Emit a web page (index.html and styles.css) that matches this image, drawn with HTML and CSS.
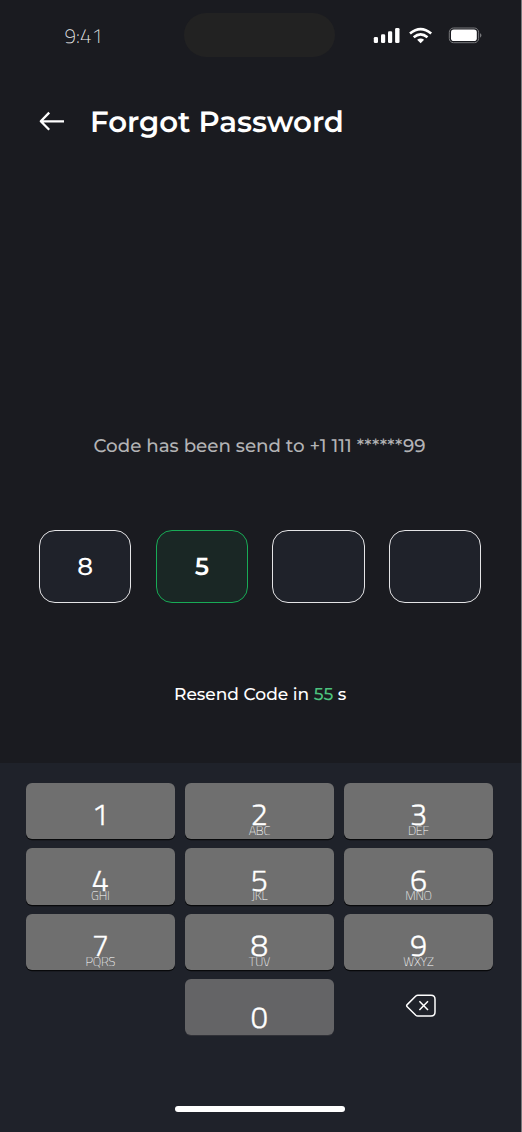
FILE: index.html
```html
<!DOCTYPE html>
<html lang="en">
<head>
<meta charset="utf-8">
<title>Forgot Password</title>
<link rel="stylesheet" href="styles.css">
</head>
<body>
<main class="phone">
  <div class="status">
    <span class="time">9:41</span>
    <div class="island"></div>
    <svg class="indicators" width="110" height="18" viewBox="0 0 110 18">
      <g fill="#fff">
        <rect x="0.8" y="10" width="4.2" height="6" rx="1.3"/>
        <rect x="8" y="7.3" width="4.2" height="8.7" rx="1.3"/>
        <rect x="15" y="4.2" width="4.2" height="11.8" rx="1.3"/>
        <rect x="22.1" y="1" width="4.4" height="15" rx="1.3"/>
      </g>
      <g fill="none" stroke="#fff" stroke-width="2.6">
        <path d="M37 6.4Q47.6 -2.3 58.2 6.4"/>
        <path d="M40.7 10.2Q47.6 4.5 54.5 10.2"/>
      </g>
      <path fill="#fff" d="M44.1 12.8Q47.6 10.3 51.1 12.8L47.6 16.3Z"/>
      <rect x="76.3" y="1" width="29.3" height="14.7" rx="4.2" fill="none" stroke="#77787b"/>
      <rect x="78" y="2.6" width="25.8" height="11.4" rx="2.8" fill="#fff"/>
      <path fill="#77787b" d="M107 6Q110 8.3 107 10.8Z"/>
    </svg>
  </div>
  <header class="header">
    <svg class="back" width="26" height="20" viewBox="0 0 26 20" fill="none" stroke="#fff" stroke-width="2.3">
      <path d="M25 10.3H2M10.2 1.6L1.8 10.3L10.2 18.8" stroke-linejoin="round"/>
    </svg>
    <h1 class="title">Forgot Password</h1>
  </header>
  <p class="sent">Code has been send to +1 111 ******99</p>
  <div class="code">
    <div class="digit">8</div>
    <div class="digit active">5</div>
    <div class="digit"></div>
    <div class="digit"></div>
  </div>
  <p class="resend">Resend Code in <span class="seconds">55</span> s</p>
  <section class="keyboard">
    <div class="keys">
      <div class="key"><b>1</b></div>
      <div class="key"><b>2</b><small>ABC</small></div>
      <div class="key"><b>3</b><small>DEF</small></div>
      <div class="key"><b>4</b><small>GHI</small></div>
      <div class="key"><b>5</b><small>JKL</small></div>
      <div class="key"><b>6</b><small>MNO</small></div>
      <div class="key"><b>7</b><small>PQRS</small></div>
      <div class="key"><b>8</b><small>TUV</small></div>
      <div class="key"><b>9</b><small>WXYZ</small></div>
      <div class="key zero"><b>0</b></div>
      <div class="delete">
        <svg width="32" height="24" viewBox="0 0 32 24" fill="none" stroke="#fff" stroke-width="1.5" stroke-linejoin="round">
          <path d="M10.8 2Q11.7 1.3 12.8 1.3H26Q30 1.3 30 5.3V18Q30 22 26 22H12.8Q11.7 22 10.8 21.2L2.2 12.8Q1.1 11.7 2.2 10.6Z"/>
          <path d="M14.4 7.3L23 16M23 7.3L14.4 16"/>
        </svg>
      </div>
    </div>
    <div class="home"></div>
  </section>
</main>
</body>
</html>
```
FILE: styles.css
```css
* { box-sizing: border-box; }
body {
  margin: 0;
  background: #77787b;
  color: #fff;
  font-family: Montserrat, Inter, sans-serif;
  text-rendering: geometricPrecision;
}
.phone {
  display: flex;
  flex-direction: column;
  width: 521px;
  height: 1132px;
  background: #1a1b20;
  overflow: hidden;
}
.status {
  display: flex;
  height: 70px;
  padding: 13px 0 0 64.5px;
}
.time {
  width: 119.5px;
  padding-top: 10px;
  font: 200 20.5px/26px "Titillium Web", "Open Sans", sans-serif;
  color: #f4f4f6;
}
.island {
  width: 151px;
  height: 44px;
  border-radius: 22px;
  background: #222;
}
.indicators { margin: 14px 0 0 38px; }
.header {
  display: flex;
  align-items: center;
  height: 104px;
  padding-left: 39px;
  gap: 25px;
}
.back { margin-top: -2px; }
.title {
  margin: 1px 0 0;
  font-size: 29.2px;
  font-weight: 600;
  white-space: nowrap;
}
.sent {
  margin: 257px 0 0;
  padding-left: 93.5px;
  font-size: 18.25px;
  font-weight: 500;
  line-height: 30px;
  color: #b3b3b5;
  white-space: nowrap;
}
.code {
  display: flex;
  gap: 24.5px;
  margin: 68.5px 0 0 39px;
}
.digit {
  display: flex;
  align-items: center;
  justify-content: center;
  width: 92.2px;
  height: 73px;
  padding-top: 1px;
  border: 1.2px solid #e4e4e6;
  border-radius: 16px;
  background: #1f222a;
  font-size: 24.5px;
  font-weight: 500;
}
.digit.active {
  border-color: #18ab56;
  background: #1a2725;
  font-weight: 600;
}
.resend {
  margin: 77px 0 0;
  padding-left: 174px;
  font-size: 17.05px;
  font-weight: 500;
  line-height: 30px;
  white-space: nowrap;
}
.seconds { color: #4cc27e; }
.keyboard {
  flex: none;
  height: 369px;
  margin-top: auto;
  padding: 20px 0 0 25.5px;
  background: #1f222a;
}
.keys {
  display: grid;
  grid-template-columns: repeat(3, 149.5px);
  grid-template-rows: 56px 57px 56px 56px;
  column-gap: 9.6px;
  row-gap: 9px;
}
.key {
  display: flex;
  flex-direction: column;
  align-items: center;
  padding-top: 13px;
  border-radius: 6px;
  background: #6f6f6f;
  box-shadow: 0 1.3px 0 #08090b;
  font-family: "Titillium Web", "Open Sans", sans-serif;
}
.key:nth-child(n+4) { padding-top: 14px; }
.key:nth-child(n+7) { padding-top: 13px; }
.key b {
  font-size: 30.5px;
  font-weight: 300;
  line-height: 36px;
  -webkit-text-stroke: 0.35px #fff;
}
.key small {
  margin-top: -8.5px;
  font-size: 12.7px;
  font-weight: 200;
  line-height: 14px;
  color: #fff;
  letter-spacing: -0.3px;
}
.key:nth-child(n+4) small { margin-top: -9px; }
.key:nth-child(n+7) small { margin-top: -8px; }
.key.zero {
  grid-column: 2;
  padding-top: 20px;
  background: #646466;
  box-shadow: 0 1px 0 #303137;
}
.delete {
  padding: 15px 0 0 61.5px;
}
.delete svg { display: block; }
.home {
  width: 170px;
  height: 6px;
  margin: 70.5px 0 0 149.5px;
  border-radius: 3px;
  background: #fff;
}
```
